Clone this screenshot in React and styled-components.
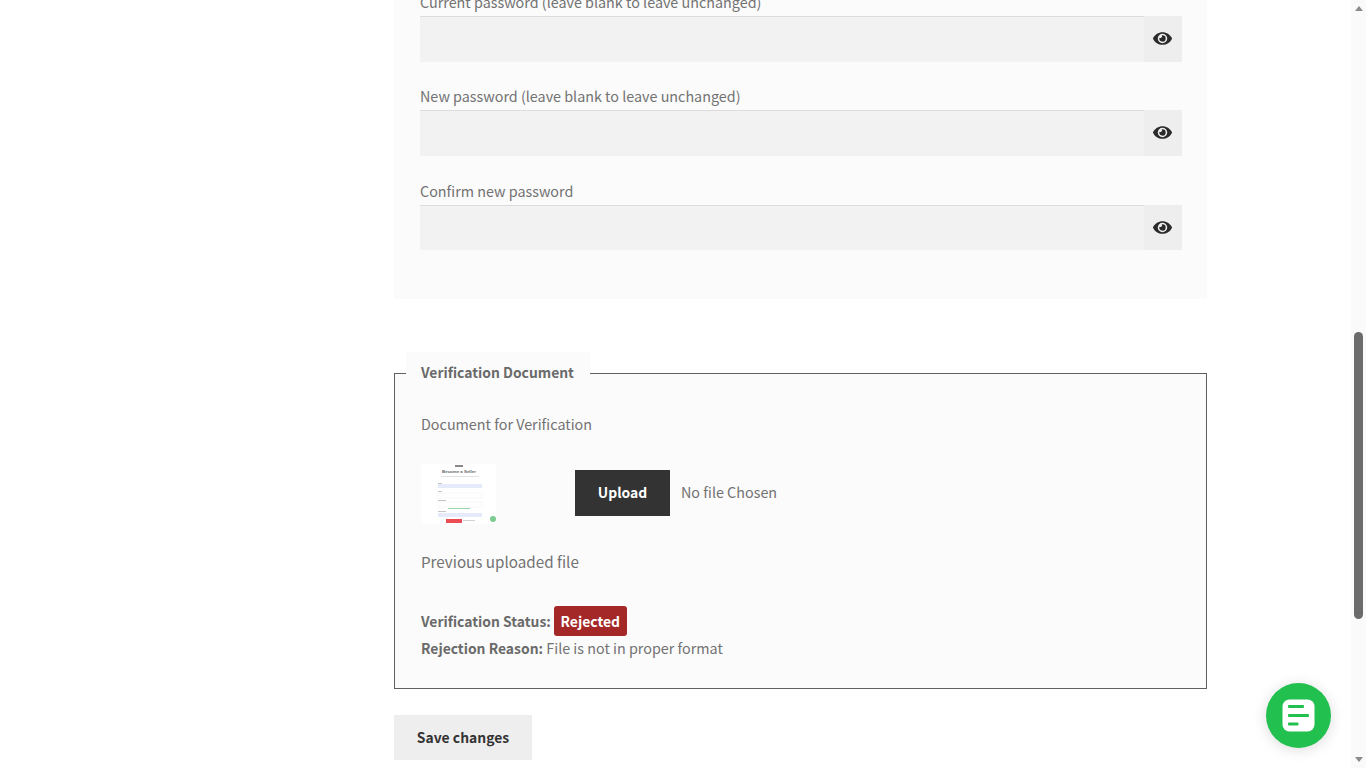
import React from "react";
import styled, { createGlobalStyle } from "styled-components";
import { FaEye } from "react-icons/fa";

const Global = createGlobalStyle`
  html, body { margin: 0; padding: 0; height: 100%; overflow: hidden; background: #fff; }
  body { font-family: "Noto Sans CJK SC", "Noto Sans", sans-serif; font-size: 14.35px; color: #727272; }
`;

const Viewport = styled.div`
  display: flex;
  height: 768px;
  overflow: hidden;
`;
const Content = styled.main`
  flex: 1;
  min-width: 0;
  padding-left: 394px;
`;
const Column = styled.div`
  width: 813px;
  margin-top: -9px;
`;
const PasswordCard = styled.section`
  background: #fbfbfb;
  padding: 0 25px 48.2px 26px;
  display: flex;
  flex-direction: column;
  gap: 23.8px;
`;
const Field = styled.div``;
const Label = styled.label`
  display: block;
  font-size: 14.35px;
  line-height: 22.8px;
  margin-bottom: 2.2px;
  color: #727272;
`;
const InputRow = styled.div`
  display: flex;
  height: 45.6px;
`;
const Input = styled.div`
  flex: 1;
  background: #f2f2f2;
  border-top: 1px solid #dcdcdc;
`;
const EyeButton = styled.div`
  width: 38px;
  background: #eeeeee;
  display: flex;
  align-items: center;
  justify-content: center;
  color: #2b2b2b;
  font-size: 19px;
  padding: 0 1px 1px 0;
  box-sizing: border-box;
`;
const Fieldset = styled.fieldset`
  margin: 53px 0 0;
  padding: 0 26px 27px 26px;
  border: 1px solid #5f5f5f;
  background: #fbfbfb;
  min-width: 0;
  box-sizing: border-box;
  height: 337px;
`;
const Legend = styled.legend`
  margin-left: -15px;
  padding: 0 15px 3px;
  background: #fbfbfb;
  font-weight: 700;
  font-size: 13.9px;
  line-height: 41px;
  color: #6a6a6a;
  width: 184px;
  box-sizing: border-box;
  white-space: nowrap;
`;
const DocLabel = styled.div`
  font-size: 14.35px;
  line-height: 24px;
  margin-top: 16px;
  color: #727272;
`;
const UploadRow = styled.div`
  display: flex;
  align-items: center;
  margin-top: 27px;
  height: 60px;
`;
const Thumb = styled.svg`
  width: 76px;
  height: 60px;
  display: block;
  flex: none;
  margin-top: 3px;
`;
const UploadButton = styled.div`
  margin-left: 78px;
  width: 95px;
  height: 46px;
  padding-bottom: 1px;
  box-sizing: border-box;
  background: #333;
  color: #fff;
  font-weight: 700;
  font-size: 13.9px;
  display: flex;
  align-items: center;
  justify-content: center;
`;
const NoFile = styled.span`
  margin-left: 11px;
  margin-bottom: 2px;
  font-size: 14.35px;
  color: #727272;
`;
const Previous = styled.div`
  margin-top: 25px;
  font-size: 15.2px;
  line-height: 26px;
  color: #727272;
`;
const StatusLine = styled.div`
  margin-top: 32px;
  display: flex;
  align-items: center;
  height: 30px;
  line-height: 30px;
`;
const ReasonLine = styled.div`
  line-height: 24px;
`;
const Strong = styled.strong`
  font-weight: 700;
  font-size: 13.9px;
  color: #6a6a6a;
`;
const Badge = styled.span`
  margin-left: 3px;
  width: 73px;
  height: 30px;
  background: #a52828;
  color: #fff;
  font-weight: 700;
  font-size: 13.9px;
  border-radius: 3px;
  display: flex;
  align-items: center;
  justify-content: center;
`;
const SaveButton = styled.div`
  margin-top: 26px;
  width: 138px;
  height: 45px;
  background: #eeeeee;
  color: #333;
  font-weight: 700;
  font-size: 13.9px;
  display: flex;
  align-items: center;
  justify-content: center;
`;
const ScrollTrack = styled.div`
  width: 15px;
  flex: none;
  background: #fafafa;
  display: flex;
  flex-direction: column;
  align-items: center;
`;
const ArrowUp = styled.div`
  margin-top: 6px;
  width: 0; height: 0;
  border-left: 4.5px solid transparent;
  border-right: 4.5px solid transparent;
  border-bottom: 5px solid #8a8a8a;
`;
const ScrollThumb = styled.div`
  margin-top: 321px;
  width: 9px;
  height: 287px;
  border-radius: 5px;
  background: #6b6b6b;
`;
const ArrowDown = styled.div`
  margin-top: auto;
  margin-bottom: 6px;
  width: 0; height: 0;
  border-left: 4.5px solid transparent;
  border-right: 4.5px solid transparent;
  border-top: 5px solid #8a8a8a;
`;
const ChatButton = styled.div`
  position: fixed;
  left: 1266px;
  top: 683px;
  width: 65px;
  height: 65px;
  border-radius: 50%;
  background: #22c04f;
  box-shadow: 0 2px 14px rgba(0,0,0,.14);
  display: flex;
  align-items: center;
  justify-content: center;
`;

const Eye = () => <EyeButton><FaEye /></EyeButton>;

const fields = [
  "Current password (leave blank to leave unchanged)",
  "New password (leave blank to leave unchanged)",
  "Confirm new password",
];

export default function App() {
  return (
    <>
      <Global />
      <Viewport>
        <Content>
          <Column>
            <PasswordCard>
              {fields.map((f) => (
                <Field key={f}>
                  <Label>{f}</Label>
                  <InputRow>
                    <Input />
                    <Eye />
                  </InputRow>
                </Field>
              ))}
            </PasswordCard>
            <Fieldset>
              <Legend>Verification Document</Legend>
              <DocLabel>Document for Verification</DocLabel>
              <UploadRow>
                <Thumb viewBox="0 0 76 60">
                  <rect x="0" y="0" width="75" height="60" rx="3" fill="#fff" />
                  <rect x="34" y="1" width="8" height="2" fill="#888" />
                  <text x="38" y="9" fontSize="4.4" fontWeight="700" textAnchor="middle" fill="#666" fontFamily="Liberation Sans, sans-serif">Become a Seller</text>
                  <rect x="20" y="12" width="38" height="1" fill="#e2e2e2" />
                  <rect x="17" y="20" width="44" height="4" fill="#e6ebfb" />
                  <rect x="17" y="19" width="4" height="1" fill="#c4c4c4" />
                  <rect x="17" y="29" width="44" height="5" fill="#fff" stroke="#eee" strokeWidth=".5" />
                  <rect x="17" y="27" width="4" height="1" fill="#c4c4c4" />
                  <rect x="17" y="38" width="44" height="5" fill="#fff" stroke="#eee" strokeWidth=".5" />
                  <rect x="17" y="36" width="8" height="1" fill="#c4c4c4" />
                  <rect x="27" y="44" width="22" height="1" fill="#9bd5a8" />
                  <rect x="17" y="49" width="44" height="4" fill="#e6ebfb" />
                  <rect x="17" y="47" width="8" height="1" fill="#c4c4c4" />
                  <rect x="25" y="55" width="16" height="4" fill="#ec4d55" />
                  <rect x="42" y="56" width="12" height="1" fill="#d0d0d0" />
                  <circle cx="72" cy="55" r="3" fill="#7ccb90" />
                </Thumb>
                <UploadButton>Upload</UploadButton>
                <NoFile>No file Chosen</NoFile>
              </UploadRow>
              <Previous>Previous uploaded file</Previous>
              <StatusLine>
                <Strong>Verification Status:</Strong>
                <Badge>Rejected</Badge>
              </StatusLine>
              <ReasonLine>
                <Strong>Rejection Reason:</Strong> File is not in proper format
              </ReasonLine>
            </Fieldset>
            <SaveButton>Save changes</SaveButton>
          </Column>
        </Content>
        <ScrollTrack>
          <ArrowUp />
          <ScrollThumb />
          <ArrowDown />
        </ScrollTrack>
      </Viewport>
      <ChatButton>
        <svg width="33" height="33" viewBox="0 0 33 33">
          <rect x="0.5" y="0.5" width="32" height="32" rx="7" fill="#fff" />
          <rect x="6" y="6" width="16" height="3" rx="1" fill="#22c04f" />
          <rect x="6" y="15" width="21" height="3" rx="1" fill="#22c04f" />
          <rect x="6" y="23.5" width="10.5" height="3" rx="1" fill="#22c04f" />
        </svg>
      </ChatButton>
    </>
  );
}
